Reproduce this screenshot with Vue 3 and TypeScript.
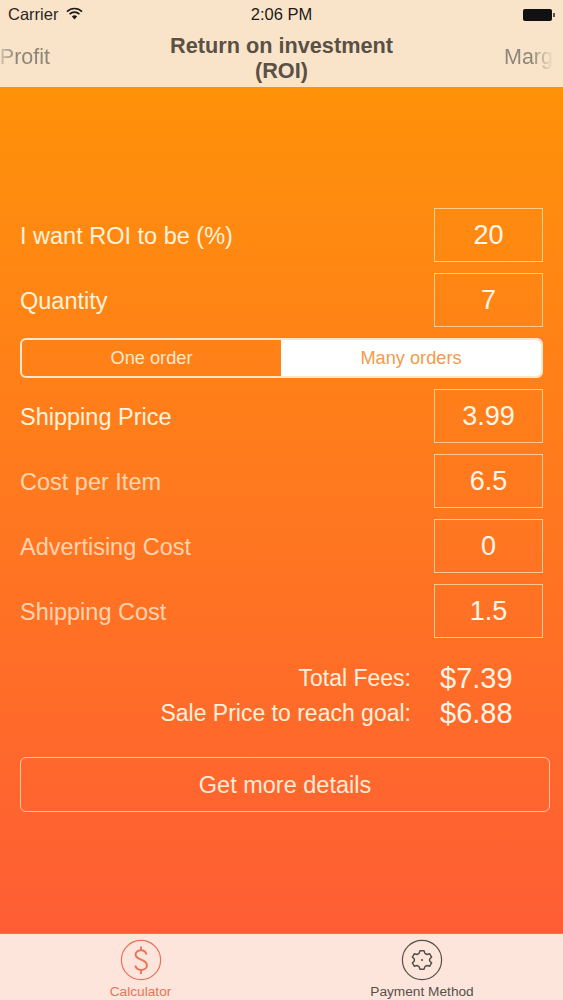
<script setup lang="ts">
interface Field { label: string; value: string; tone?: string }
const topFields: Field[] = [
  { label: 'I want ROI to be (%)', value: '20' },
  { label: 'Quantity', value: '7' },
]
const costFields: Field[] = [
  { label: 'Shipping Price', value: '3.99' },
  { label: 'Cost per Item', value: '6.5', tone: 'dim' },
  { label: 'Advertising Cost', value: '0', tone: 'dim' },
  { label: 'Shipping Cost', value: '1.5', tone: 'dim' },
]
</script>

<template>
  <div class="screen">
    <header class="top">
      <div class="status">
        <div class="status-left">
          <span>Carrier</span>
          <svg class="wifi" width="17" height="13" viewBox="0 0 17 13">
            <path d="M1 4.600a10.600 10.600 0 0 1 15 0" fill="none" stroke="#1d1a16" stroke-width="1.7" />
            <path d="M3.600 7.200a7 7 0 0 1 9.800 0" fill="none" stroke="#1d1a16" stroke-width="1.7" />
            <path d="M8.500 12.400 5.900 9.600a3.700 3.700 0 0 1 5.200 0z" fill="#1d1a16" />
          </svg>
        </div>
        <span class="clock">2:06 PM</span>
        <div class="battery"><i class="cell"></i><i class="nub"></i></div>
      </div>
      <nav class="pager">
        <span class="side side-left">Profit</span>
        <h1>Return on investment<br />(ROI)</h1>
        <span class="side side-right">Marg</span>
      </nav>
    </header>

    <main class="body">
      <section class="fields">
        <div v-for="f in topFields" :key="f.label" class="row">
          <span class="label">{{ f.label }}</span>
          <div class="box">{{ f.value }}</div>
        </div>
        <div class="segment">
          <div class="seg">One order</div>
          <div class="seg active">Many orders</div>
        </div>
        <div v-for="f in costFields" :key="f.label" class="row">
          <span class="label" :class="f.tone">{{ f.label }}</span>
          <div class="box">{{ f.value }}</div>
        </div>
      </section>

      <section class="summary">
        <div class="sum-row"><span class="sum-label">Total Fees:</span><span class="sum-value">$7.39</span></div>
        <div class="sum-row"><span class="sum-label">Sale Price to reach goal:</span><span class="sum-value">$6.88</span></div>
      </section>

      <button class="details" type="button">Get more details</button>
    </main>

    <footer class="tabs">
      <div class="tab current">
        <svg width="42" height="42" viewBox="0 0 42 42" fill="none" stroke="currentColor">
          <circle cx="21" cy="21" r="19.600" stroke-width="1.200" />
          <path d="M26.500 15.500c-.6-2.600-2.800-4.200-5.500-4.200-3.200 0-5.400 1.900-5.400 4.500 0 5.900 11.300 3.900 11.300 10.400 0 2.800-2.400 4.700-5.700 4.700-3 0-5.300-1.700-5.900-4.400" stroke-width="1.900" />
          <path d="M21 7.500v4M21 30.900v4" stroke-width="1.800" />
        </svg>
        <span>Calculator</span>
      </div>
      <div class="tab">
        <svg width="42" height="42" viewBox="0 0 42 42" fill="none" stroke="currentColor">
          <circle cx="21" cy="21" r="19.600" stroke-width="1.200" />
          <g transform="translate(21 21) scale(.88) translate(-21 -21)">
            <path d="M18.600 10.600h4.800l.9 2.900 2.400 1.200 2.900-.9 2.300 4-2.200 2.100v2.200l2.200 2.100-2.300 4-2.900-.9-2.400 1.200-.9 2.900h-4.800l-.9-2.900-2.400-1.200-2.900.9-2.300-4 2.200-2.100v-2.200l-2.200-2.100 2.300-4 2.900.9 2.400-1.200z" stroke-width="1.700" stroke-linejoin="round" />
          </g>
          <circle cx="21" cy="21" r="1.100" fill="currentColor" stroke="none" />
        </svg>
        <span>Payment Method</span>
      </div>
    </footer>
  </div>
</template>

<style scoped>
.screen {
  width: 563px;
  height: 1000px;
  display: flex;
  flex-direction: column;
  overflow: hidden;
  font-family: "Liberation Sans", Arial, sans-serif;
}

.top {
  height: 87px;
  flex: none;
  background: #f9e4ca;
  color: #1d1a16;
  overflow: hidden;
}

.status {
  height: 29px;
  display: grid;
  grid-template-columns: 1fr auto 1fr;
  align-items: center;
  padding: 0 8px;
  font-size: 16.500px;
}

.status-left {
  display: flex;
  align-items: center;
  gap: 8px;
  color: #2b2722;
}

.wifi {
  margin-top: -3px;
}

.clock {
  color: #1d1a16;
}

.battery {
  justify-self: end;
  display: flex;
  align-items: center;
  gap: 1px;
  margin-right: 0;
}

.cell {
  width: 29px;
  height: 12px;
  background: #111;
  border-radius: 2px;
}

.nub {
  width: 2px;
  height: 4px;
  background: #555;
}

.pager {
  position: relative;
  height: 58px;
  text-align: center;
}

h1 {
  margin: 0;
  padding-top: 4px;
  font-size: 21.700px;
  line-height: 25px;
  font-weight: 700;
  color: #5a5045;
}

.side {
  position: absolute;
  top: 16px;
  font-size: 21.500px;
  color: #8f867b;
  white-space: nowrap;
}

.side-left {
  left: -12px;
  width: 62px;
  text-align: right;
  -webkit-mask-image: linear-gradient(90deg, transparent 5%, #000 45%);
  mask-image: linear-gradient(90deg, transparent 5%, #000 45%);
}

.side-right {
  left: 504px;
  width: 50px;
  text-align: left;
  -webkit-mask-image: linear-gradient(90deg, #000 55%, transparent 100%);
  mask-image: linear-gradient(90deg, #000 55%, transparent 100%);
}

.body {
  flex: 1;
  min-height: 0;
  display: flex;
  flex-direction: column;
  padding: 121px 13px 0 20px;
  background: linear-gradient(180deg, #ff9209 0%, #ff5d35 100%);
  border-bottom: 1px solid #f2744f;
  color: #fff;
}

.fields {
  display: flex;
  flex-direction: column;
  gap: 11px;
  padding-right: 7px;
}

.row {
  height: 54px;
  display: flex;
  align-items: center;
  justify-content: space-between;
}

.label {
  padding-top: 2px;
  font-size: 23.500px;
  color: #fff3dc;
}

.label.dim {
  color: rgba(255, 238, 215, 0.8);
}

.box {
  width: 109px;
  height: 54px;
  box-sizing: border-box;
  display: flex;
  align-items: center;
  justify-content: center;
  padding-top: 1px;
  border: 1px solid rgba(255, 226, 180, 0.75);
  font-size: 27px;
  color: #fff6e8;
}

.segment {
  height: 40px;
  display: flex;
  box-sizing: border-box;
  border: 2px solid #ffe6c8;
  border-radius: 6px;
  overflow: hidden;
}

.seg {
  flex: 0 0 259px;
  display: flex;
  align-items: center;
  justify-content: center;
  font-size: 18.200px;
  color: #ffe8cc;
}

.seg.active {
  flex: 1;
  background: #fff;
  color: #f39a4c;
}

.summary {
  display: flex;
  flex-direction: column;
  margin-top: 23px;
}

.sum-row {
  height: 35px;
  display: flex;
  align-items: center;
  justify-content: flex-end;
  padding-right: 37px;
}

.sum-label {
  font-size: 23px;
  color: #fff0dd;
}

.sum-value {
  width: 73px;
  margin-left: 29px;
  font-size: 29px;
  color: #fff4e6;
  white-space: nowrap;
}

.details {
  width: 530px;
  height: 55px;
  margin-top: 26px;
  padding: 2px 0 0;
  background: transparent;
  border: 1px solid rgba(255, 226, 195, 0.75);
  border-radius: 6px;
  font-family: inherit;
  font-size: 23.500px;
  color: #ffebd8;
}

.tabs {
  height: 66px;
  flex: none;
  display: grid;
  grid-template-columns: 281px 282px;
  background: #fee5db;
  color: #55504b;
}

.tab {
  display: flex;
  flex-direction: column;
  align-items: center;
  padding-top: 5px;
  font-size: 13.700px;
}

.tab svg {
  flex: none;
}

.tab span {
  margin-top: 3px;
}

.tab.current {
  color: #ea7258;
}
</style>
